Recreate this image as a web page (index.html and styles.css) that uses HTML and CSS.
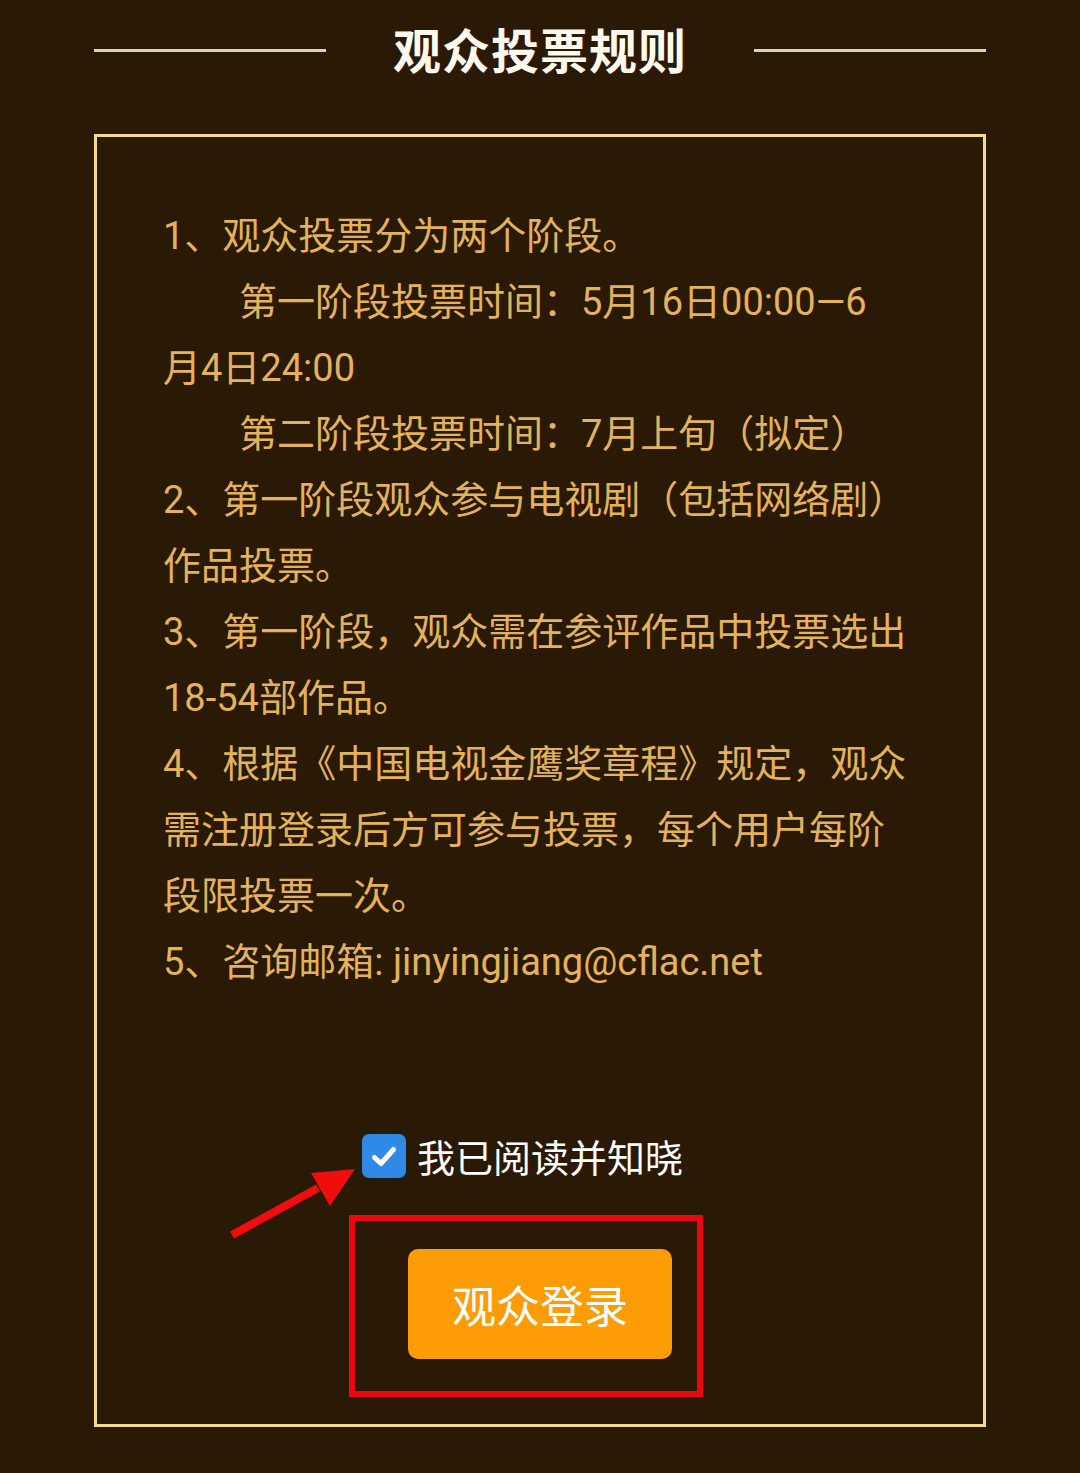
FILE: index.html
```html
<!DOCTYPE html>
<html lang="zh-CN">
<head>
<meta charset="utf-8">
<title>观众投票规则</title>
<link rel="stylesheet" href="styles.css">
</head>
<body>
<div class="page">
  <header class="header">
    <span class="rule-line"></span>
    <h1 class="title">观众投票规则</h1>
    <span class="rule-line"></span>
  </header>
  <section class="box">
    <div class="rules">
      <p class="line">1、观众投票分为两个阶段。</p>
      <p class="line indent">第一阶段投票时间：5月16日00:00—6</p>
      <p class="line">月4日24:00</p>
      <p class="line indent">第二阶段投票时间：7月上旬（拟定）</p>
      <p class="line">2、第一阶段观众参与电视剧（包括网络剧）</p>
      <p class="line">作品投票。</p>
      <p class="line">3、第一阶段，观众需在参评作品中投票选出</p>
      <p class="line">18-54部作品。</p>
      <p class="line">4、根据《中国电视金鹰奖章程》规定，观众</p>
      <p class="line">需注册登录后方可参与投票，每个用户每阶</p>
      <p class="line">段限投票一次。</p>
      <p class="line">5、咨询邮箱: jinyingjiang@cflac.net</p>
    </div>
    <label class="agree">
      <span class="checkbox">
        <svg viewBox="0 0 44 44" width="44" height="44"><path d="M12.5 23.5 L19 29.5 L31.5 15.5" fill="none" stroke="#ffffff" stroke-width="5" stroke-linecap="round" stroke-linejoin="round"/></svg>
      </span>
      <span class="agree-text">我已阅读并知晓</span>
    </label>
    <div class="btn-wrap">
      <button class="login-btn">观众登录</button>
      <span class="highlight"></span>
    </div>
  </section>
  <svg class="arrow" viewBox="0 0 150 100" width="150" height="100">
    <line x1="12" y1="85" x2="98" y2="38" stroke="#f00d0d" stroke-width="8"/>
    <polygon points="135,19 91,23 110,56" fill="#f00d0d"/>
  </svg>
</div>
</body>
</html>
```

FILE: styles.css
```css
html, body {
  margin: 0;
  padding: 0;
}
body {
  background: #2a1904;
  font-family: "Noto Sans CJK SC", "Noto Sans", sans-serif;
}
.page {
  position: relative;
  width: 1080px;
  height: 1473px;
  overflow: hidden;
}
.header {
  height: 96px;
  margin: 0 94px;
  display: flex;
  align-items: center;
  gap: 67px;
}
.rule-line {
  flex: 1;
  height: 3px;
  background: #d9d1c6;
  margin-top: 4px;
}
.title {
  margin: 0;
  font-size: 48px;
  font-weight: 700;
  color: #fff8ec;
  letter-spacing: 1px;
  line-height: 1;
}
.box {
  margin: 38px 94px 0;
  height: 1293px;
  box-sizing: border-box;
  border: 3px solid #f5da8c;
  padding: 66px 0 0 66px;
  display: flex;
  flex-direction: column;
}
.rules {
  color: #e2b35b;
  font-family: Roboto, "Noto Sans CJK SC", sans-serif;
  font-size: 38px;
  line-height: 66px;
}
.line {
  margin: 0;
  white-space: nowrap;
}
.indent {
  text-indent: 76px;
}
.agree {
  margin: 136px 0 0 -66px;
  align-self: center;
  display: flex;
  align-items: center;
  gap: 11px;
  height: 50px;
  padding-right: 35px;
}
.checkbox {
  width: 44px;
  height: 44px;
  border-radius: 7px;
  background: #2e8ae6;
  display: block;
}
.checkbox svg {
  display: block;
}
.agree-text {
  color: #ffffff;
  font-size: 38px;
  line-height: 50px;
}
.btn-wrap {
  position: relative;
  align-self: center;
  margin: 68px 0 0 -66px;
  width: 264px;
  height: 110px;
}
.login-btn {
  width: 264px;
  height: 110px;
  border: none;
  border-radius: 10px;
  background: #fe9c05;
  color: #ffffff;
  font-family: "Noto Sans CJK SC", "Noto Sans", sans-serif;
  font-size: 44px;
  padding: 0;
  display: block;
}
.highlight {
  position: absolute;
  left: -59px;
  top: -34px;
  width: 354px;
  height: 182px;
  box-sizing: border-box;
  border: 6px solid #ea0810;
  pointer-events: none;
}
.arrow {
  position: absolute;
  left: 220px;
  top: 1150px;
}
```
